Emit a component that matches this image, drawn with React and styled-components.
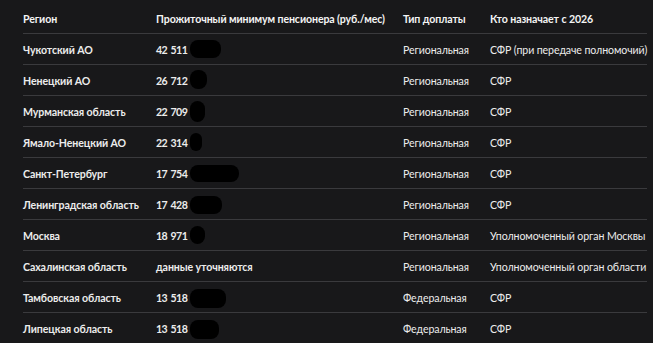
import React from "react";
import styled, { createGlobalStyle } from "styled-components";

const Global = createGlobalStyle`
  html, body { margin: 0; padding: 0; background: #18181a; }
  body { font-family: "Lato", "Noto Sans", sans-serif; }
`;

const Page = styled.div`
  width: 653px;
  height: 343px;
  overflow: hidden;
  background: #18181a;
  padding: 4px 8px 0 23px;
  box-sizing: border-box;
`;

const Table = styled.div`
  width: 622px;
  display: grid;
  grid-template-columns: 133px 247px 87px 1fr;
  font-size: 10.6px;
  letter-spacing: -0.1px;
  color: #ececec;
`;

const HeadCell = styled.div`
  height: 29px;
  display: flex;
  align-items: center;
  font-weight: 700;
  color: #f4f4f4;
  white-space: nowrap;
`;

const Cell = styled.div`
  height: 30px;
  display: flex;
  align-items: center;
  padding-top: 1px;
  box-sizing: content-box;
  height: 29px;
  border-top: 1px solid #3a3a3d;
  white-space: nowrap;
  font-weight: ${(p) => (p.$strong ? 700 : 400)};
`;

const Amount = styled.span`
  letter-spacing: ${(p) => (p.$numeric ? "-0.6px" : "-0.1px")};
  word-spacing: ${(p) => (p.$numeric ? "1.5px" : "0")};
`;

const Redaction = styled.span`
  display: inline-block;
  background: #000;
  border-radius: 8px;
  margin-left: 3px;
  position: relative;
`;

const rows = [
  ["Чукотский АО", "42 511", "Региональная", "СФР (при передаче полномочий)", [31, 18, -1]],
  ["Ненецкий АО", "26 712", "Региональная", "СФР", [17, 19, -1]],
  ["Мурманская область", "22 709", "Региональная", "СФР", [15, 21, 0]],
  ["Ямало-Ненецкий АО", "22 314", "Региональная", "СФР", [12, 18, -1]],
  ["Санкт-Петербург", "17 754", "Региональная", "СФР", [49, 17, 0]],
  ["Ленинградская область", "17 428", "Региональная", "СФР", [32, 18, 0]],
  ["Москва", "18 971", "Региональная", "Уполномоченный орган Москвы", [15, 18, -1]],
  ["Сахалинская область", "данные уточняются", "Региональная", "Уполномоченный орган области", null],
  ["Тамбовская область", "13 518", "Федеральная", "СФР", [36, 19, 1]],
  ["Липецкая область", "13 518", "Федеральная", "СФР", [29, 19, 1]],
];

export default function App() {
  return (
    <>
      <Global />
      <Page>
        <Table>
          <HeadCell>Регион</HeadCell>
          <HeadCell>Прожиточный минимум пенсионера (руб./мес)</HeadCell>
          <HeadCell>Тип доплаты</HeadCell>
          <HeadCell>Кто назначает с 2026</HeadCell>
          {rows.map(([region, value, type, who, red]) => (
            <React.Fragment key={region}>
              <Cell $strong>{region}</Cell>
              <Cell $strong>
                <Amount $numeric={!!red}>{value}</Amount>
                {red && (
                  <Redaction
                    style={{ width: red[0], height: red[1], top: red[2] }}
                  />
                )}
              </Cell>
              <Cell>{type}</Cell>
              <Cell>{who}</Cell>
            </React.Fragment>
          ))}
        </Table>
      </Page>
    </>
  );
}
